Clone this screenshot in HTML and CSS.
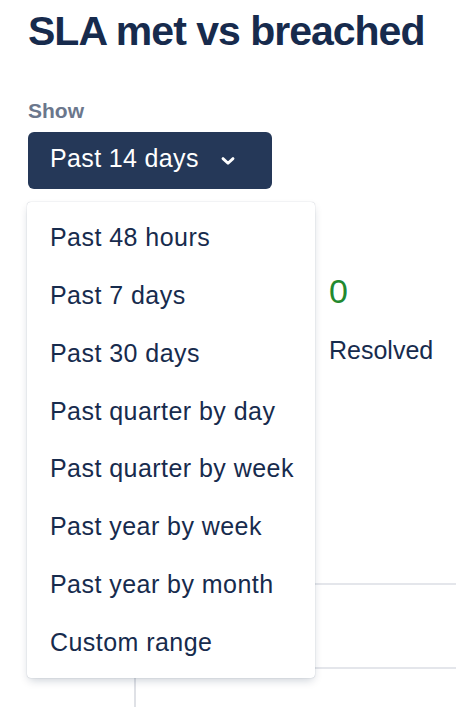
FILE: index.html
```html
<!DOCTYPE html>
<html lang="en">
<head>
<meta charset="utf-8">
<title>SLA met vs breached</title>
<link rel="stylesheet" href="styles.css">
</head>
<body>
<main class="page">
  <h1 class="title">SLA met vs breached</h1>
  <div class="label">Show</div>
  <div class="picker">
    <button class="picker-button" type="button">
      <span class="picker-text">Past 14 days</span>
      <svg class="chevron" width="14" height="8" viewBox="0 0 14 8" aria-hidden="true"><path d="M2 1.6 L7 6.2 L12 1.6" fill="none" stroke="#fff" stroke-width="2.8" stroke-linecap="round" stroke-linejoin="round"/></svg>
    </button>
    <ul class="menu">
      <li class="menu-item">Past 48 hours</li>
      <li class="menu-item">Past 7 days</li>
      <li class="menu-item">Past 30 days</li>
      <li class="menu-item">Past quarter by day</li>
      <li class="menu-item">Past quarter by week</li>
      <li class="menu-item">Past year by week</li>
      <li class="menu-item">Past year by month</li>
      <li class="menu-item">Custom range</li>
    </ul>
  </div>
  <section class="stats">
    <div class="stat">
      <div class="stat-value">0</div>
      <div class="stat-label">Resolved</div>
    </div>
  </section>
  <section class="chart">
    <div class="gridline"></div>
    <div class="gridline"></div>
  </section>
</main>
</body>
</html>
```
FILE: styles.css
```css
html, body {
  margin: 0;
  padding: 0;
  background: #ffffff;
}
body {
  width: 456px;
  height: 708px;
  overflow: hidden;
  font-family: "Liberation Sans", Arial, sans-serif;
  color: #172B4D;
}
.page {
  padding: 7px 0 0 28px;
}
.title {
  margin: 0;
  font-size: 41px;
  line-height: 48px;
  font-weight: 700;
  letter-spacing: -1px;
  color: #172B4D;
  white-space: nowrap;
}
.label {
  margin-top: 44px;
  font-size: 21px;
  line-height: 24px;
  font-weight: 700;
  color: #6B778C;
}
.picker {
  position: relative;
  margin-top: 9px;
}
.picker-button {
  display: flex;
  align-items: center;
  gap: 22px;
  width: 244px;
  height: 57px;
  box-sizing: border-box;
  padding: 0 0 0 22px;
  border: 0;
  border-radius: 6px;
  background: #253858;
  color: #ffffff;
  font-family: inherit;
  font-size: 25px;
  letter-spacing: 0.35px;
  cursor: pointer;
}
.picker-text {
  margin-bottom: 4px;
}
.chevron {
  display: block;
  flex: none;
}
.menu {
  position: absolute;
  top: 70px;
  left: -1px;
  z-index: 2;
  width: 288px;
  height: 476px;
  box-sizing: border-box;
  margin: 0;
  padding: 7px 0;
  list-style: none;
  background: #ffffff;
  border-radius: 4px;
  box-shadow: 0 4px 10px -2px rgba(9, 30, 66, 0.22), 0 0 1px rgba(9, 30, 66, 0.35);
}
.menu-item {
  display: flex;
  align-items: center;
  height: 57.75px;
  padding-left: 23px;
  font-size: 25px;
  letter-spacing: 0.45px;
  color: #172B4D;
  white-space: nowrap;
}
.stats {
  display: flex;
  margin-top: 82px;
  padding-left: 301px;
}
.stat-value {
  font-size: 34px;
  line-height: 40px;
  color: #22892F;
}
.stat-label {
  margin-top: 24px;
  font-size: 25px;
  line-height: 30px;
  color: #172B4D;
}
.chart {
  margin-top: 218px;
  margin-left: 106px;
  width: 320px;
  height: 124px;
  border-left: 2px solid #DFE1E6;
}
.gridline {
  height: 82px;
  border-top: 2px solid #E4E6EB;
}
.gridline:last-child {
  height: 38px;
}
```
